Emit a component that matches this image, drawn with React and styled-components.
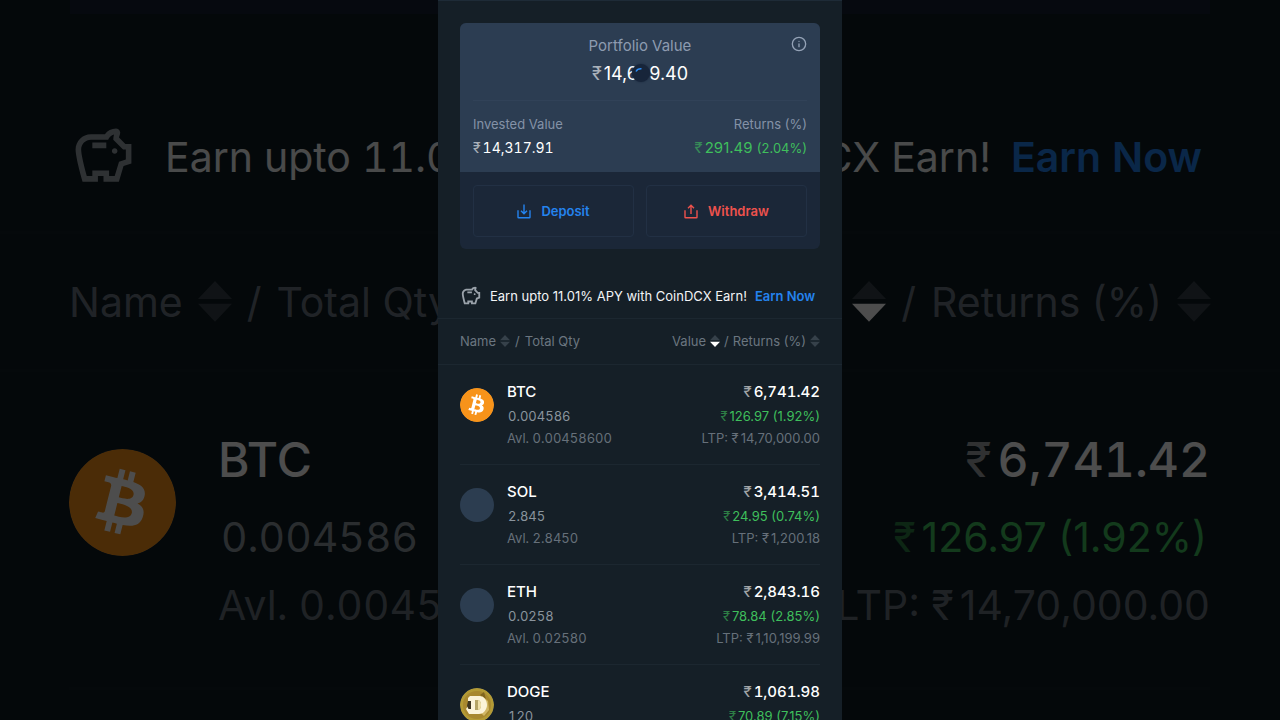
import styled, { createGlobalStyle } from 'styled-components';
import { Info } from 'lucide-react';
import { MdOutlineSavings } from 'react-icons/md';
import { FaBitcoin } from 'react-icons/fa';

const GlobalStyle = createGlobalStyle`
  * {
    box-sizing: border-box;
  }
  body {
    margin: 0;
    background: #000;
    font-family: Inter, 'Noto Sans', sans-serif;
    overflow: hidden;
  }
  button {
    font: inherit;
    color: inherit;
    background: none;
    border: 0;
    padding: 0;
    cursor: pointer;
  }
`;

const Page = styled.div`
  display: grid;
  grid-template-columns: 1fr minmax(auto, 404px) 1fr;
  height: 100vh;
  overflow: hidden;
`;

/* dimmed close-up of the list on both sides of the phone */
const Side = styled.div`
  min-width: 0;
  overflow: hidden;
  opacity: 0.3;
  background: #0e1b22;
  font-size: 41px;
  color: #6b7680;
  white-space: nowrap;
`;

const SideCard = styled.div`
  height: 14px;
  background: #161f33;
  margin: ${({ $right }) => ($right ? '0 70px 0 0' : '0 0 0 70px')};
`;

const SideRow = styled.div`
  display: flex;
  align-items: center;
  justify-content: ${({ $right }) => ($right ? 'flex-end' : 'flex-start')};
  gap: 15px;
  height: 138px;
  padding: ${({ $right }) => ($right ? '0 69px 0 0' : '0 0 0 69px')};
  border-bottom: 3px solid #131f26;
`;

const SideEarn = styled(SideRow)`
  gap: ${({ $right }) => ($right ? 20 : 28)}px;
  height: 220px;
  padding: ${({ $right }) => ($right ? '68px 78px 0 0' : '68px 0 0 70px')};
  color: #f2f4f6;
  font-variant-numeric: tabular-nums;
`;

const SideCoin = styled.div`
  display: flex;
  justify-content: ${({ $right }) => ($right ? 'flex-end' : 'flex-start')};
  gap: 42px;
  height: 318px;
  padding-top: 50px;
  margin: ${({ $right }) => ($right ? '0 70px 0 0' : '0 0 0 69px')};
  border-bottom: 3px solid #131f26;
  text-align: ${({ $right }) => ($right ? 'right' : 'left')};
`;

const SideSymbol = styled.div`
  font-size: 48px;
  line-height: 76px;
  font-weight: 500;
  color: #fff;
  font-variant-numeric: tabular-nums;
`;

const SideValue = styled.div`
  padding: 0 3px;
  line-height: 78px;
  color: ${({ $up }) => ($up ? '#3fbf5c' : '#8a949d')};
  font-variant-numeric: ${({ $up }) => ($up ? 'normal' : 'tabular-nums')};
`;

const SideNote = styled.div`
  line-height: 58px;
  color: #66707a;
  font-variant-numeric: ${({ $plain }) => ($plain ? 'normal' : 'tabular-nums')};
`;

const SideLink = styled.span`
  color: #2483ee;
  font-weight: 600;
`;

const Phone = styled.main`
  overflow: hidden;
  background: #151f27;
  border-top: 1px solid #1e2b37;
`;

const Card = styled.section`
  margin: 22px 22px 0;
  border-radius: 6px;
  overflow: hidden;
  background: #1b2738;
`;

const Summary = styled.div`
  position: relative;
  height: 149px;
  padding: 12px 13px 0;
  background: #2c3d52;
`;

const Total = styled.div`
  display: flex;
  flex-direction: column;
  align-items: center;
  gap: 5px;
  height: 66px;
  border-bottom: 1px solid #314258;
`;

const TotalLabel = styled.h1`
  margin: 0;
  font-size: 15px;
  line-height: 22px;
  font-weight: 400;
  color: #8d9bb0;
`;

const TotalValue = styled.div`
  position: relative;
  font-size: 18px;
  line-height: 24px;
  color: #fff;
`;

const Spinner = styled.span`
  position: absolute;
  left: 50%;
  top: 50%;
  width: 18px;
  height: 18px;
  margin: -10px 0 0 -8px;
  border-radius: 50%;
  background: #17253a;
  box-shadow: 0 0 2px #17253a;

  svg {
    display: block;
  }
`;

const InfoButton = styled.button`
  position: absolute;
  top: 13px;
  right: 13px;
  color: #94a2b6;

  svg {
    display: block;
  }
`;

const Stats = styled.div`
  display: flex;
  justify-content: space-between;
  padding-top: 13px;
`;

const Stat = styled.div`
  display: flex;
  flex-direction: column;
  gap: 4px;
  text-align: ${({ $right }) => ($right ? 'right' : 'left')};
`;

const StatLabel = styled.span`
  font-size: 13px;
  line-height: 20px;
  color: #8492a7;
`;

const StatValue = styled.span`
  font-size: ${({ $up }) => ($up ? 15 : 14)}px;
  line-height: 20px;
  color: ${({ $up }) => ($up ? '#3fbf5c' : '#fff')};
  font-variant-numeric: ${({ $up }) => ($up ? 'normal' : 'tabular-nums')};

  small {
    font-size: 13px;
  }
`;

const Rupee = styled.span`
  margin-right: ${({ $big }) => ($big ? 6 : 2)}px;
  font-weight: 400;
  opacity: ${({ $solid }) => ($solid ? 1 : 0.6)};
`;

const Actions = styled.div`
  display: grid;
  grid-template-columns: 1fr 1fr;
  gap: 12px;
  padding: 13px 13px 12px;
`;

const ActionButton = styled.button`
  display: flex;
  align-items: center;
  justify-content: center;
  gap: 10px;
  height: 52px;
  && {
    border: 1px solid #223044;
    border-radius: 4px;
    color: ${({ $color }) => $color};
    font-size: 13px;
    font-weight: 600;
  }
`;

const EarnBar = styled.div`
  display: flex;
  align-items: center;
  height: 70px;
  padding: 24px 22px 0;
  border-bottom: 1px solid #1c2730;
  font-size: 13px;
  color: #f2f4f6;
  white-space: nowrap;
`;

const EarnText = styled.span`
  margin: 0 8px;
`;

const EarnLink = styled.a`
  color: #2483ee;
  font-weight: 600;
  text-decoration: none;
`;

const PigIcon = styled(MdOutlineSavings)`
  flex: none;
  color: #9aa2aa;
`;

const SortArrows = styled.svg`
  flex: none;
`;

const Table = styled.table`
  width: 100%;
  border-collapse: collapse;
`;

const HeadCell = styled.th`
  height: 45px;
  padding: 0 22px;
  border-bottom: 1px solid #1c2730;
  font-size: 13px;
  font-weight: 400;
  color: #6b7680;
  text-align: left;
  white-space: nowrap;
`;

const SortGroup = styled.div`
  display: flex;
  align-items: center;
  justify-content: ${({ $right }) => ($right ? 'flex-end' : 'flex-start')};
  gap: ${({ $right }) => ($right ? 4 : 5)}px;
`;

const SortButton = styled.button`
  display: flex;
  align-items: center;
  gap: 4px;
`;

const CoinCell = styled.td`
  padding: ${({ $right }) => ($right ? '0 22px 0 0' : '0 0 0 22px')};
`;

const CellBody = styled.div`
  display: flex;
  gap: 13px;
  height: 100px;
  padding-top: 15px;
  border-bottom: 1px solid #1c2730;
  justify-content: ${({ $right }) => ($right ? 'flex-end' : 'flex-start')};
  text-align: ${({ $right }) => ($right ? 'right' : 'left')};
`;

const CoinIcon = styled.span`
  flex: none;
  width: ${({ $size }) => $size}px;
  height: ${({ $size }) => $size}px;
  margin-top: ${({ $top }) => $top}px;
  border-radius: 50%;
  overflow: hidden;
  background: #2c3d50;

  svg {
    display: block;
  }
`;

const Symbol = styled.div`
  font-size: 15px;
  line-height: 24px;
  font-weight: 500;
  color: #fff;
  font-variant-numeric: tabular-nums;
`;

const Qty = styled.div`
  padding: 0 1px;
  font-size: 13px;
  line-height: 24px;
  color: #8a949d;
  font-variant-numeric: tabular-nums;
`;

const Gain = styled.div`
  font-size: 13px;
  line-height: 24px;
  color: #3fbf5c;
`;

const Note = styled.div`
  font-size: 13px;
  line-height: 20px;
  color: #66707a;
  font-variant-numeric: ${({ $plain }) => ($plain ? 'normal' : 'tabular-nums')};
`;

const coins = [
  { symbol: 'BTC', qty: '0.004586', avl: '0.00458600', value: '6,741.42', gain: '126.97 (1.92%)', ltp: '14,70,000.00' },
  { symbol: 'SOL', qty: '2.845', avl: '2.8450', value: '3,414.51', gain: '24.95 (0.74%)', ltp: '1,200.18' },
  { symbol: 'ETH', qty: '0.0258', avl: '0.02580', value: '2,843.16', gain: '78.84 (2.85%)', ltp: '1,10,199.99' },
  { symbol: 'DOGE', qty: '120', avl: '120.0000', value: '1,061.98', gain: '70.89 (7.15%)', ltp: '8.85' },
];

function SortIcon({ size = 10, active }) {
  return (
    <SortArrows width={size} height={size * 1.2} viewBox="0 0 10 12" aria-hidden="true">
      <path d="M5 0l5 5.3H0z" fill="#36414a" />
      <path d="M0 6.7h10L5 12z" fill={active ? '#fff' : '#36414a'} />
    </SortArrows>
  );
}

function TrayIcon({ up }) {
  return (
    <svg width="14" height="15" viewBox="0 0 14 15" fill="none" stroke="currentColor" strokeWidth="1.4" aria-hidden="true">
      <path d="M1 6.200V13.200a.6.6 0 0 0 .6.6h10.800a.6.6 0 0 0 .6-.6V6.200" />
      <path d={up ? 'M7 10V1.200M4 4.200l3-3 3 3' : 'M7 .4v9.200M4 6.800l3 3 3-3'} />
    </svg>
  );
}

function BtcLogo({ size }) {
  return (
    <svg width={size} height={size} viewBox="0 0 34 34" aria-hidden="true">
      <circle cx="17" cy="17" r="17" fill="#f7931a" />
      <circle cx="17" cy="17" r="14" fill="#fff" />
      <FaBitcoin size={34} color="#f7931a" />
    </svg>
  );
}

function DogeLogo() {
  return (
    <svg width="34" height="34" viewBox="0 0 34 34" aria-hidden="true">
      <circle cx="17" cy="17" r="17" fill="#b39a35" />
      <circle cx="17" cy="17" r="14" fill="#a8882f" />
      <path d="M20 7l4-3 2 7z" fill="#80651f" />
      <path d="M22 8l6 5 1 9-5 6-3-3z" fill="#d1b765" />
      <path d="M8 10l2-2h10c5 1 7 5 7 9s-3 9-8 9H9l-3-5 2-3z" fill="#fbf3d8" />
      <path d="M8 13h3v8H8.500L7 18z" fill="#3e3520" />
      <path d="M15 12h2c3 0 4 2 4 5s-1 5-4 5h-2z" fill="#b5a465" />
      <path d="M18 12c2 1 3 2 3 5s-1 4-3 5z" fill="#efe0a9" />
    </svg>
  );
}

function CoinLogo({ symbol }) {
  if (symbol === 'BTC') return <BtcLogo size={34} />;
  if (symbol === 'DOGE') return <DogeLogo />;
  return null;
}

function LeftSide() {
  return (
    <Side aria-hidden="true">
      <SideCard />
      <SideEarn>
        <PigIcon size={67} />
        <span>Earn upto 11.01%</span>
      </SideEarn>
      <SideRow>
        Name <SortIcon size={34} /> / <span>Total Qty</span>
      </SideRow>
      <SideCoin>
        <CoinIcon $size={107} $top={27}><BtcLogo size={107} /></CoinIcon>
        <div>
          <SideSymbol>BTC</SideSymbol>
          <SideValue>0.004586</SideValue>
          <SideNote>Avl. 0.00458600</SideNote>
        </div>
      </SideCoin>
    </Side>
  );
}

function RightSide() {
  return (
    <Side aria-hidden="true">
      <SideCard $right />
      <SideEarn $right>
        <span>CoinDCX Earn!</span>
        <SideLink>Earn Now</SideLink>
      </SideEarn>
      <SideRow $right>
        Value <SortIcon size={34} active /> / <span>Returns (%)</span> <SortIcon size={34} />
      </SideRow>
      <SideCoin $right>
        <div>
          <SideSymbol><Rupee $big>₹</Rupee>6,741.42</SideSymbol>
          <SideValue $up><Rupee $big>₹</Rupee>126.97 (1.92%)</SideValue>
          <SideNote $plain>LTP: <Rupee $big $solid>₹</Rupee>14,70,000.00</SideNote>
        </div>
      </SideCoin>
    </Side>
  );
}

export default function App() {
  return (
    <Page>
      <GlobalStyle />
      <LeftSide />
      <Phone>
        <Card>
          <Summary>
            <Total>
              <TotalLabel>Portfolio Value</TotalLabel>
              <TotalValue>
                <Rupee>₹</Rupee>14,609.40
                <Spinner>
                  <svg width="18" height="18" viewBox="0 0 18 18" fill="none">
                    <path d="M4 7.500C5 5.500 6.800 4.600 9.500 4.800" stroke="#2b8af0" strokeWidth="1.500" />
                  </svg>
                </Spinner>
              </TotalValue>
            </Total>
            <InfoButton aria-label="About portfolio value"><Info size={16} strokeWidth={2} /></InfoButton>
            <Stats>
              <Stat>
                <StatLabel>Invested Value</StatLabel>
                <StatValue><Rupee>₹</Rupee>14,317.91</StatValue>
              </Stat>
              <Stat $right>
                <StatLabel>Returns (%)</StatLabel>
                <StatValue $up><Rupee>₹</Rupee>291.49 <small>(2.04%)</small></StatValue>
              </Stat>
            </Stats>
          </Summary>
          <Actions>
            <ActionButton $color="#2483ee"><TrayIcon /> Deposit</ActionButton>
            <ActionButton $color="#ee524d"><TrayIcon up /> Withdraw</ActionButton>
          </Actions>
        </Card>
        <EarnBar>
          <PigIcon size={22} />
          <EarnText>Earn upto 11.01% APY with CoinDCX Earn!</EarnText>
          <EarnLink href="#earn">Earn Now</EarnLink>
        </EarnBar>
        <Table>
          <thead>
            <tr>
              <HeadCell>
                <SortGroup>
                  <SortButton>Name <SortIcon /></SortButton> / <span>Total Qty</span>
                </SortGroup>
              </HeadCell>
              <HeadCell>
                <SortGroup $right>
                  <SortButton>Value <SortIcon active /></SortButton> / <SortButton>Returns (%) <SortIcon /></SortButton>
                </SortGroup>
              </HeadCell>
            </tr>
          </thead>
          <tbody>
            {coins.map(coin => (
              <tr key={coin.symbol}>
                <CoinCell>
                  <CellBody>
                    <CoinIcon $size={34} $top={8}><CoinLogo symbol={coin.symbol} /></CoinIcon>
                    <div>
                      <Symbol>{coin.symbol}</Symbol>
                      <Qty>{coin.qty}</Qty>
                      <Note>Avl. {coin.avl}</Note>
                    </div>
                  </CellBody>
                </CoinCell>
                <CoinCell $right>
                  <CellBody $right>
                    <div>
                      <Symbol><Rupee>₹</Rupee>{coin.value}</Symbol>
                      <Gain><Rupee>₹</Rupee>{coin.gain}</Gain>
                      <Note $plain>LTP: <Rupee $solid>₹</Rupee>{coin.ltp}</Note>
                    </div>
                  </CellBody>
                </CoinCell>
              </tr>
            ))}
          </tbody>
        </Table>
      </Phone>
      <RightSide />
    </Page>
  );
}
